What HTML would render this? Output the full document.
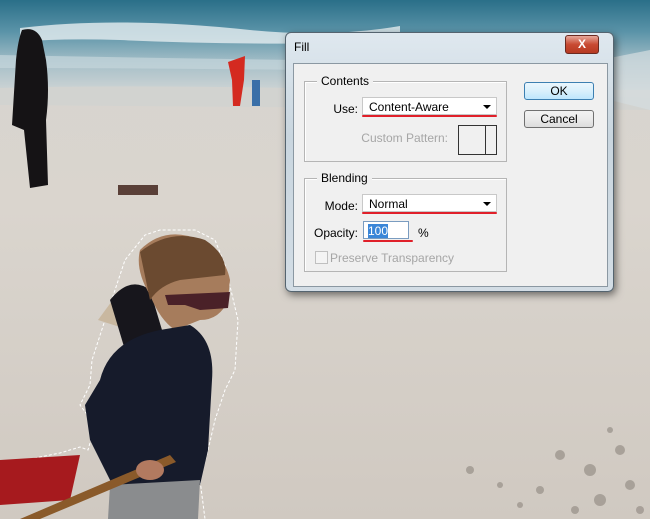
<!DOCTYPE html>
<html><head><style>
body{margin:0;width:650px;height:519px;overflow:hidden;font-family:"Liberation Sans",Tahoma,sans-serif;}
#bg{position:absolute;left:0;top:0}
.dlg{position:absolute;left:285px;top:32px;width:327px;height:258px;background:linear-gradient(#dfe8ef,#c9d6df 40%,#d3dde5);border:1px solid #55646f;border-radius:6px;box-shadow:2px 3px 8px rgba(0,0,0,.5);}
.title{position:absolute;left:8px;top:7px;font-size:12px;color:#000}
.close{position:absolute;left:279px;top:2px;width:32px;height:17px;border:1px solid #6b2a20;border-radius:3px;background:linear-gradient(#e7a89a,#c84a32 50%,#b63a22);color:#fff;font-weight:bold;font-size:12px;text-align:center;line-height:16px}
.client{position:absolute;left:7px;top:30px;width:313px;height:222px;background:#f0f0f0;border:1px solid #8b98a2}
.grp{position:absolute;border:1px solid #b5b5b5;box-shadow:inset 1px 1px 0 #fff}
.lg{position:absolute;top:-8px;left:12px;background:#f0f0f0;padding:0 4px;font-size:12px}
.lbl{position:absolute;font-size:12px;text-align:right}
.sel{position:absolute;background:#fff;border:1px solid #c8c8c8;font-size:12px;height:18px;line-height:18px;padding-left:6px;box-sizing:border-box}
.arr{position:absolute;right:5px;top:7px;width:0;height:0;border-left:4px solid transparent;border-right:4px solid transparent;border-top:4px solid #000}
.red{position:absolute;height:2px;background:#e0202a;border-radius:1px}
.btn{position:absolute;width:70px;height:18px;border:1px solid #707070;border-radius:3px;background:linear-gradient(#f2f2f2,#ebebeb 50%,#dcdcdc);font-size:12px;text-align:center;line-height:17px;box-sizing:border-box}
</style></head><body>
<svg id="bg" width="650" height="519" viewBox="0 0 650 519">
<defs>
<linearGradient id="sea" x1="0" y1="0" x2="0" y2="1">
<stop offset="0" stop-color="#2a6f88"/><stop offset=".35" stop-color="#5a93a8"/><stop offset=".7" stop-color="#a6bfc8"/><stop offset="1" stop-color="#ccd3d4"/></linearGradient>
<linearGradient id="sand" x1="0" y1="0" x2="0" y2="1">
<stop offset="0" stop-color="#d6d4d0"/><stop offset=".4" stop-color="#dad5ce"/><stop offset="1" stop-color="#d0c9c1"/></linearGradient>
</defs>
<rect width="650" height="519" fill="url(#sand)"/>
<rect width="650" height="90" fill="url(#sea)"/>
<path d="M0 88 Q200 82 650 98 L650 110 L0 105Z" fill="#d2d3d0"/>
<path d="M20 28 Q120 16 250 30 Q330 38 400 26 L400 42 Q250 46 120 40 Q60 38 20 42Z" fill="#e6eef0" opacity=".8"/>
<path d="M0 55 Q150 58 300 60 L300 70 Q150 68 0 68Z" fill="#c4d6dc" opacity=".7"/>
<path d="M600 60 L650 50 L650 110 L610 100Z" fill="#d4dde0" opacity=".7"/>
<g fill="#8d867e" opacity=".6">
<circle cx="560" cy="455" r="5"/><circle cx="590" cy="470" r="6"/><circle cx="620" cy="450" r="5"/><circle cx="540" cy="490" r="4"/><circle cx="600" cy="500" r="6"/><circle cx="630" cy="485" r="5"/><circle cx="470" cy="470" r="4"/><circle cx="500" cy="485" r="3"/><circle cx="575" cy="510" r="4"/><circle cx="520" cy="505" r="3"/><circle cx="640" cy="510" r="4"/><circle cx="610" cy="430" r="3"/>
</g>
<!-- woman -->
<path d="M22 30 Q36 26 42 40 L46 60 Q50 90 46 120 L48 185 L30 188 L24 130 L12 125 L16 60 Q18 40 22 30Z" fill="#151315"/>
<rect x="118" y="185" width="40" height="10" fill="#5a4038"/>
<!-- people mid -->
<path d="M228 62 L245 56 L244 80 L240 106 L233 106 L232 80Z" fill="#d42a20"/>
<rect x="252" y="80" width="8" height="26" fill="#3a6fa8"/>
<!-- selection outline -->
<path d="M0 466 L40 457 L60 453 L80 447 L88 450 L95 425 L80 405 L90 385 L92 360 L105 320 L125 260 L145 235 L160 230 L195 230 L215 240 L225 265 L238 320 L235 370 L225 390 L215 420 L208 450 L200 480 L205 519" fill="none" stroke="#fff" stroke-width="1" stroke-dasharray="3 2"/>
<!-- boy -->
<path d="M98 320 L120 290 L140 290 L160 340 Z" fill="#c9b8a0"/>
<path d="M110 300 Q130 275 150 290 L165 340 L125 350Z" fill="#17161c"/>
<path d="M140 250 Q165 225 200 240 Q225 255 230 280 L228 300 Q220 320 200 320 L175 330 Q160 320 150 295 Q135 270 140 250Z" fill="#a67c5c"/>
<path d="M140 252 Q170 228 205 240 Q228 255 225 275 L180 280 Q160 285 150 300Z" fill="#6b4a30"/>
<path d="M165 295 L230 292 L228 308 L200 310 L185 305 L168 305Z" fill="#4a2128"/>
<path d="M100 380 Q110 340 160 330 L190 325 Q215 340 212 380 L208 450 L200 485 L115 490 L90 440 L85 405Z" fill="#161b2b"/>
<path d="M110 485 L200 480 L198 519 L108 519Z" fill="#8a8c8e"/>
<path d="M0 460 L80 455 L70 500 L0 505Z" fill="#a61a1e"/>
<path d="M20 519 L170 455 L176 462 L40 519Z" fill="#8a5a2a"/>
<ellipse cx="150" cy="470" rx="14" ry="10" fill="#b27a60"/>
</svg>
<div class="dlg">
<div class="title">Fill</div>
<div class="close">X</div>
<div class="client">
<div class="grp" style="left:10px;top:17px;width:201px;height:79px"><div class="lg">Contents</div></div>
<div class="lbl" style="left:20px;top:38px;width:44px">Use:</div>
<div class="sel" style="left:68px;top:33px;width:135px">Content-Aware<div class="arr"></div></div>
<div class="red" style="left:68px;top:51px;width:135px"></div>
<div class="lbl" style="left:40px;top:67px;width:114px;color:#a6a6a6">Custom Pattern:</div>
<div style="position:absolute;left:164px;top:61px;width:37px;height:28px;border:1px solid #333;background:#f0f0f0"><div style="position:absolute;left:26px;top:0;width:1px;height:28px;background:#333"></div></div>
<div class="grp" style="left:10px;top:114px;width:201px;height:92px"><div class="lg">Blending</div></div>
<div class="lbl" style="left:15px;top:135px;width:49px">Mode:</div>
<div class="sel" style="left:68px;top:130px;width:135px">Normal<div class="arr"></div></div>
<div class="red" style="left:68px;top:148px;width:135px"></div>
<div class="lbl" style="left:8px;top:162px;width:56px">Opacity:</div>
<div class="sel" style="left:69px;top:157px;width:46px;padding-left:4px;border-color:#7a9cc0"><span style="background:#3a86d8;color:#fff">100</span></div>
<div class="red" style="left:69px;top:176px;width:50px"></div>
<div class="lbl" style="left:124px;top:162px">%</div>
<div style="position:absolute;left:21px;top:187px;width:11px;height:11px;border:1px solid #c0c0c0;background:#f4f4f4"></div>
<div class="lbl" style="left:36px;top:187px;color:#a6a6a6">Preserve Transparency</div>
<div class="btn" style="left:230px;top:18px;border-color:#3c7fb1;background:linear-gradient(#eaf6fd,#d9f0fc 50%,#bee6fd)">OK</div>
<div class="btn" style="left:230px;top:46px">Cancel</div>
</div>
</div>
</body></html>
